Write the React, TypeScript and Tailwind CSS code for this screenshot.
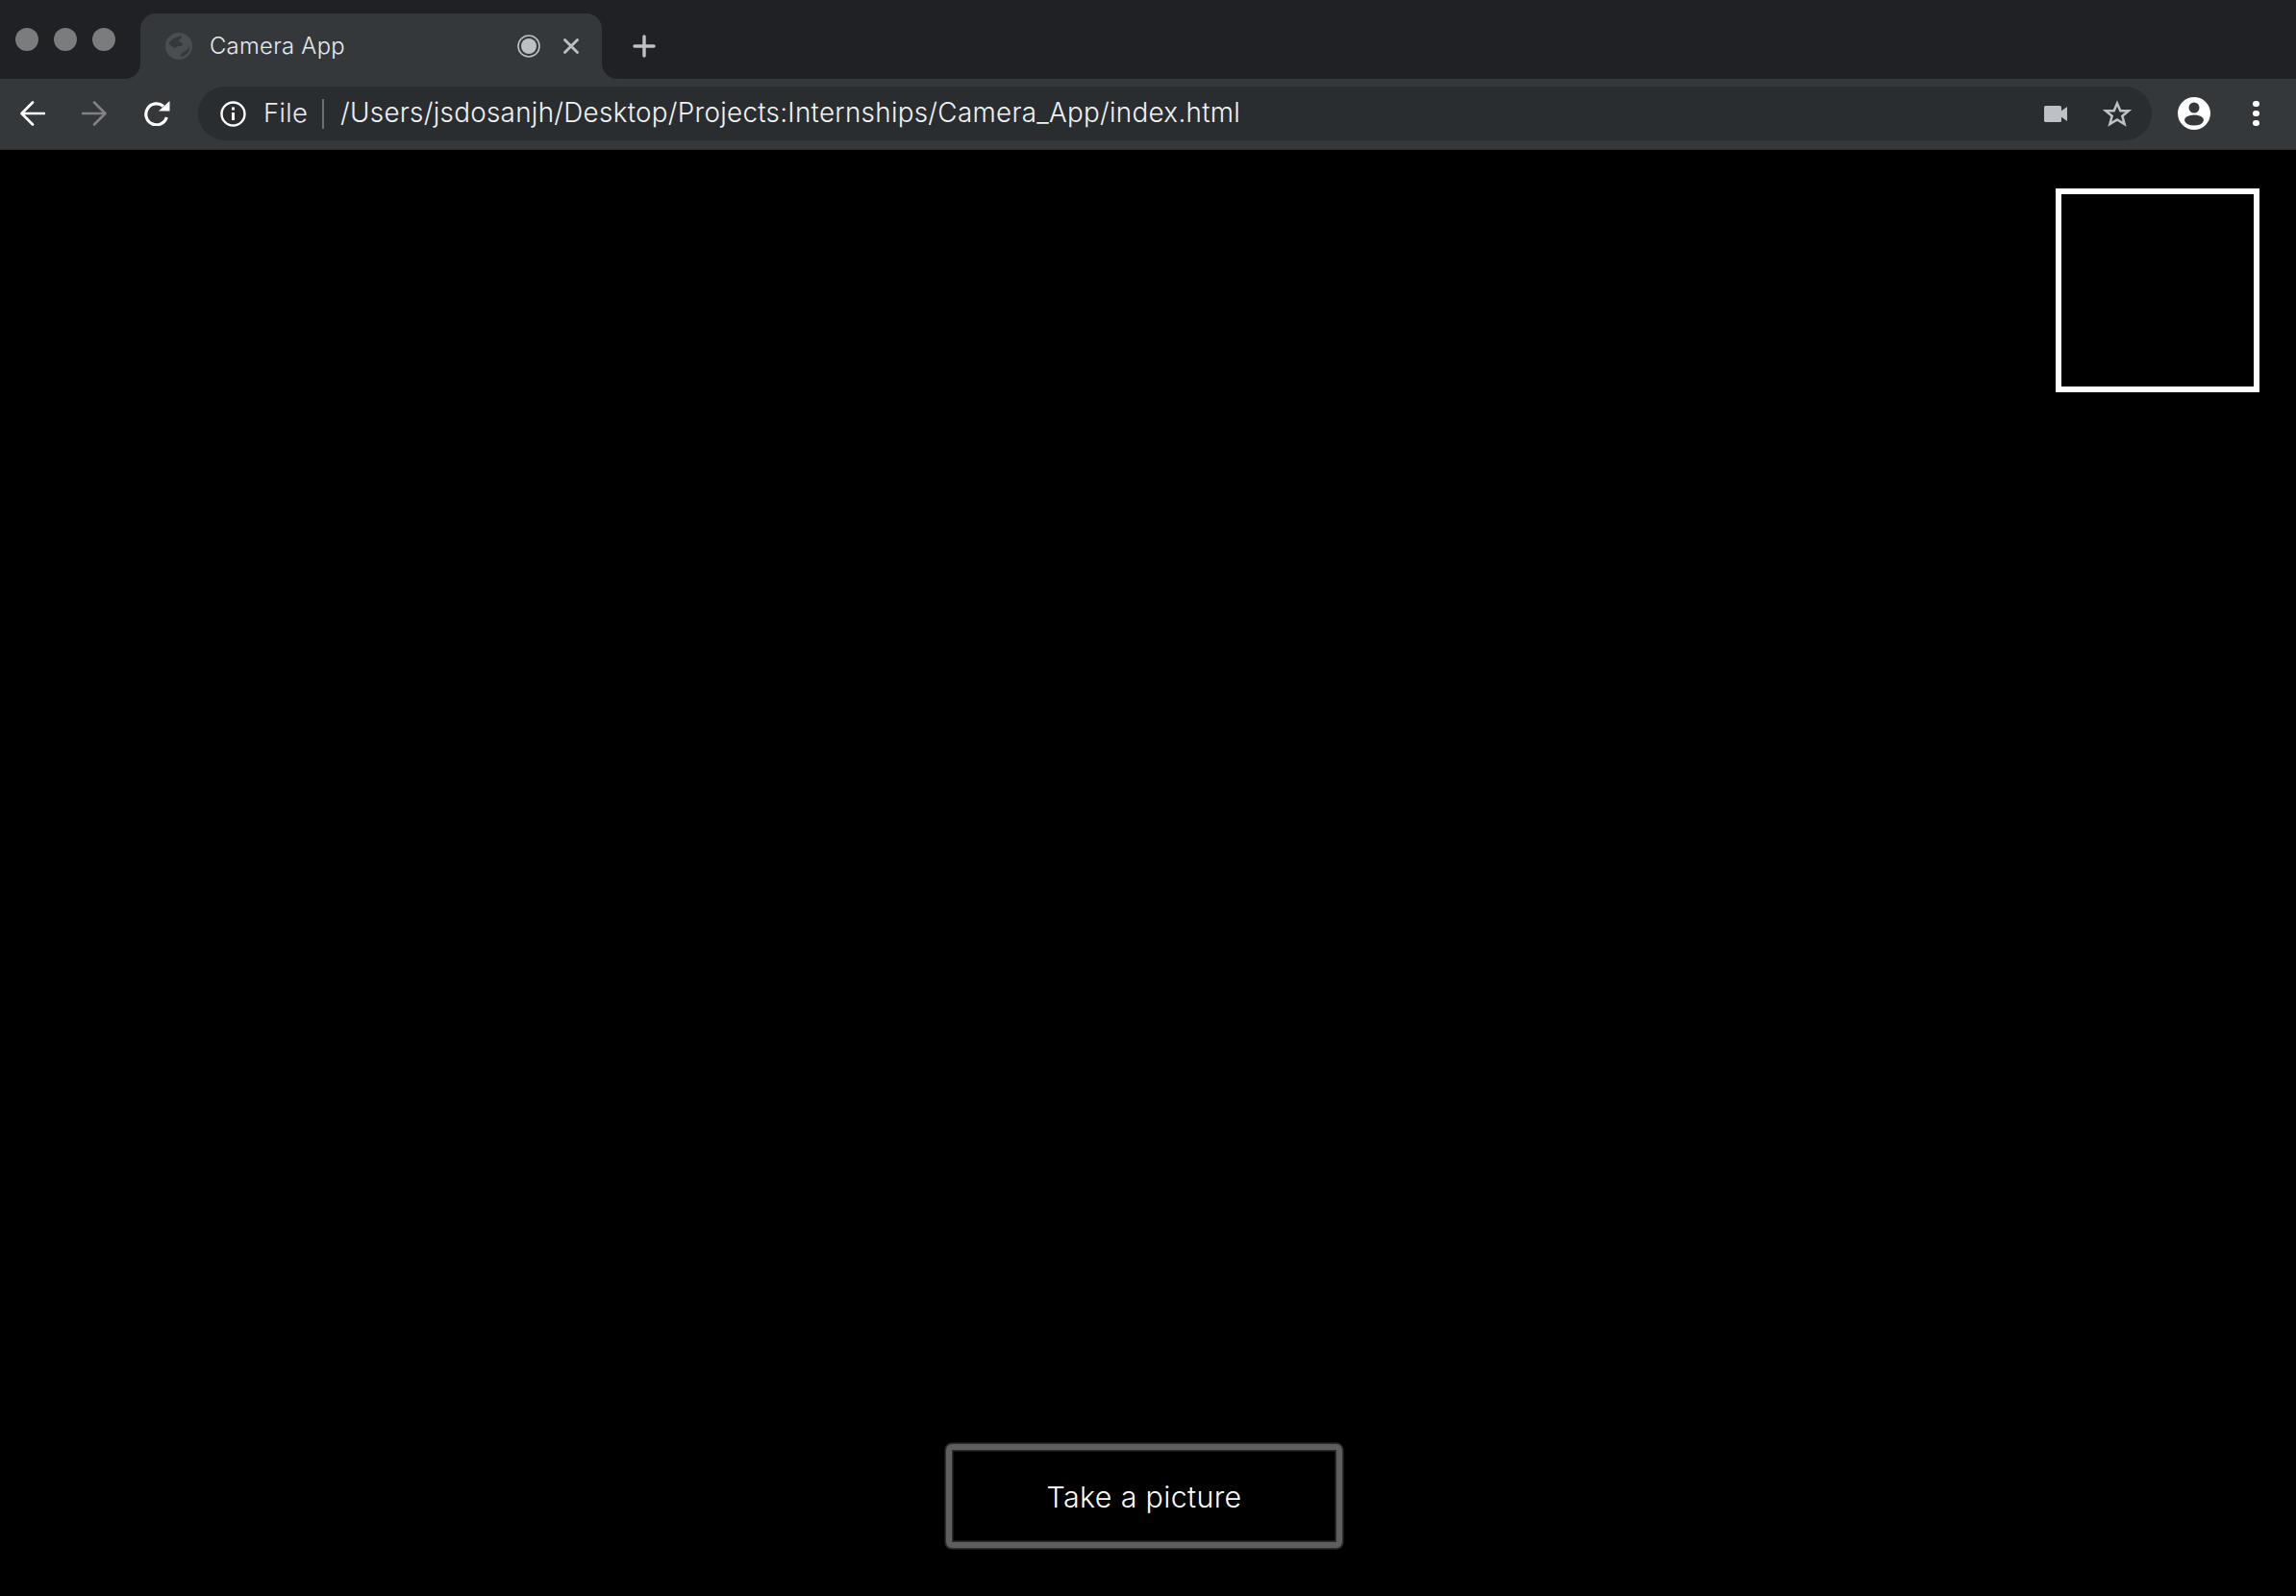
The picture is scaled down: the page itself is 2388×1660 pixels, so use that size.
const Dark = "bg-[#202124]";

function Globe() {
  return (
    <svg width="28" height="28" viewBox="0 0 24 24" className="shrink-0">
      <circle cx="12" cy="12" r="12" fill="#4a4d51" />
      <path d="M3 9.500 C5 6 9 4 14 2.500 C15.500 4.500 13 6 11.500 7 C13.500 9 15.500 8.500 15.500 11 C13.500 13 10.500 11 9.500 13.500 C6.500 13.500 5 11.500 3 9.500Z M13.500 21.500 C13 19.500 15 18 17.500 16.500 C19 15.500 20.500 14.500 21.500 12.500 C22 17 18.500 21 13.500 21.500Z" fill="#35383b" />
    </svg>
  );
}

function Address() {
  return (
    <div className="ml-[29px] flex h-[56px] w-[2032px] shrink-0 items-center rounded-full bg-[#2a2d30] text-[#f1f3f4]">
      <svg width="27" height="27" viewBox="0 0 27 27" fill="none" stroke="#fff" className="ml-[23px] shrink-0">
        <circle cx="13.500" cy="13.500" r="12" strokeWidth="2.400" />
        <path d="M13.500 12V20" strokeWidth="3" />
        <path d="M13.500 6.500V9.500" strokeWidth="3" />
      </svg>
      <span className="ml-[18px] w-[46px] text-[27.500px] font-light leading-none tracking-[0.3px] text-[#e8eaed]">File</span>
      <span className="ml-[15px] h-[31px] w-[2px] bg-[#6d7073]" />
      <span className="ml-[17px] text-[27.800px] font-light leading-none tracking-[0.3px] text-[#f1f3f4]">/Users/jsdosanjh/Desktop/Projects:Internships/Camera_App/index.html</span>
      <div className="ml-auto flex items-center">
        <svg width="24" height="17" viewBox="0 0 24 17" fill="#bdc1c6">
          <rect x="0" y="0" width="18" height="17" rx="1.500" />
          <path d="M17 6L24 1V16L17 11Z" />
        </svg>
        <svg width="30" height="28" viewBox="0 0 30 28" fill="none" stroke="#bdc1c6" strokeWidth="2.500" strokeLinejoin="miter" className="ml-[37px] mr-[21px]">
          <path d="M15 3.500L18.300 11.200H27L20.300 16.700L22.600 25L15 20.400L7.400 25L9.700 16.700L3 11.200H11.700Z" />
        </svg>
      </div>
    </div>
  );
}

function Toolbar() {
  return (
    <div className="flex h-[74px] items-center border-b border-[#2b2e31] bg-[#35383b] pb-[1px]">
      <svg width="26" height="26" viewBox="0 0 26 26" fill="none" stroke="#fff" strokeWidth="2.600" strokeLinecap="round" strokeLinejoin="round" className="ml-[21px] shrink-0">
        <path d="M25 13H3M13 1.500L1.500 13L13 24.500" />
      </svg>
      <svg width="26" height="26" viewBox="0 0 26 26" fill="none" stroke="#7f8184" strokeWidth="2.600" strokeLinecap="round" strokeLinejoin="round" className="ml-[38px] shrink-0">
        <path d="M1 13H23M13 1.500L24.500 13L13 24.500" />
      </svg>
      <svg width="28" height="26" viewBox="0 0 28 26" fill="none" className="ml-[38px] shrink-0">
        <path d="M21 5.500A11 11 0 1 0 24.300 17" stroke="#fff" strokeWidth="3.200" />
        <path d="M16 10.500H27.500V0Z" fill="#fff" />
      </svg>
      <Address />
      <svg width="34" height="34" viewBox="0 0 34 34" className="ml-[27px] shrink-0">
        <circle cx="17" cy="17" r="17" fill="#fff" />
        <circle cx="17" cy="11" r="5.500" fill="#35383b" />
        <ellipse cx="17" cy="24" rx="10" ry="5.500" fill="#35383b" />
      </svg>
      <div className="ml-[44px] flex flex-col gap-[3.500px]">
        <span className="h-[6.500px] w-[6.500px] rounded-full bg-white" />
        <span className="h-[6.500px] w-[6.500px] rounded-full bg-white" />
        <span className="h-[6.500px] w-[6.500px] rounded-full bg-white" />
      </div>
    </div>
  );
}

export default function App() {
  return (
    <div className="flex h-[1660px] w-[2388px] flex-col overflow-hidden bg-black font-[Inter,sans-serif]">
      <div className="flex h-[82px] bg-[#35383b]">
        <div className={`flex w-[146px] shrink-0 items-center gap-[16px] rounded-br-[16px] pl-[16px] ${Dark}`}>
          <span className="h-[24px] w-[24px] rounded-full bg-[#7b7c7e]" />
          <span className="h-[24px] w-[24px] rounded-full bg-[#7b7c7e]" />
          <span className="h-[24px] w-[24px] rounded-full bg-[#7b7c7e]" />
        </div>
        <div className={`w-[480px] shrink-0 pt-[14px] ${Dark}`}>
          <div className="flex h-[68px] items-center rounded-t-[16px] bg-[#35383b] pl-[26px]">
            <Globe />
            <span className="ml-[18px] text-[23.800px] font-light tracking-[0.3px] text-[#e8eaed]">Camera App</span>
            <svg width="24" height="24" viewBox="0 0 24 24" className="ml-auto">
              <circle cx="12" cy="12" r="11" fill="none" stroke="#bdc1c6" strokeWidth="1.600" />
              <circle cx="12" cy="12" r="8" fill="#bdc1c6" />
            </svg>
            <svg width="16" height="16" viewBox="0 0 16 16" stroke="#bdc1c6" strokeWidth="2.800" strokeLinecap="round" className="ml-[24px] mr-[24px]">
              <path d="M1.500 1.500L14.500 14.500M14.500 1.500L1.500 14.500" />
            </svg>
          </div>
        </div>
        <div className={`flex flex-1 items-center rounded-bl-[16px] pl-[32px] pt-[14px] ${Dark}`}>
          <svg width="24" height="24" viewBox="0 0 24 24" stroke="#bdc1c6" strokeWidth="3.400" strokeLinecap="round">
            <path d="M12 2V22M2 12H22" />
          </svg>
        </div>
      </div>
      <Toolbar />
      <main className="flex flex-1 flex-col bg-black pb-[50px] pt-[40px]">
        <div className="ml-[2138px] h-[212px] w-[212px] border-[6px] border-white" />
        <div className="ml-[984px] mt-auto flex h-[108px] w-[412px] items-center justify-center rounded-[6px] border-[6px] border-[#5e5e5e] pt-[3px] text-[30.400px] font-light tracking-[0.35px] text-white shadow-[0_0_0_1.500px_#2e2e2e,inset_0_0_0_1.500px_#2e2e2e]">
          Take a picture
        </div>
      </main>
    </div>
  );
}
